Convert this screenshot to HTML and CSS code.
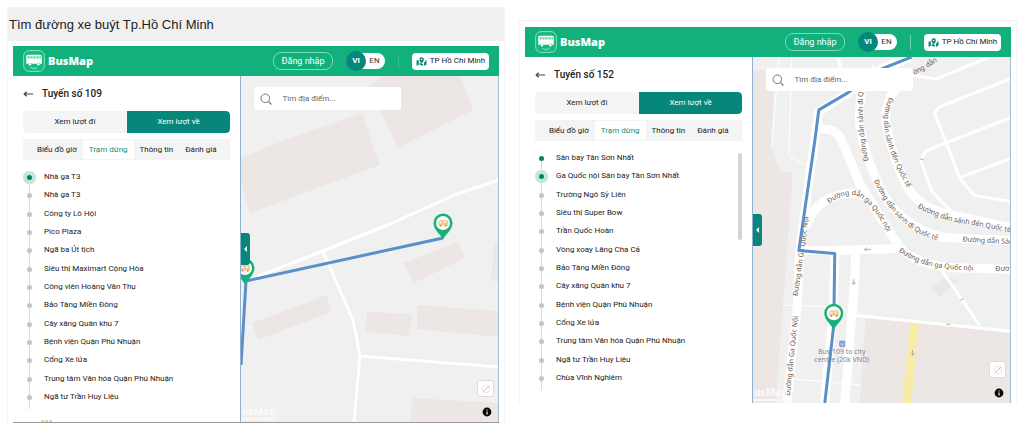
FILE: index.html
```
<!DOCTYPE html>
<html lang="vi">
<head>
<meta charset="utf-8">
<title>BusMap</title>
<link rel="stylesheet" href="styles.css">
</head>
<body>
<svg class="defs" aria-hidden="true">
  <symbol id="logo" viewBox="0 0 22 22">
    <rect x=".6" y=".6" width="20.8" height="20.8" rx="5.5" fill="#19b97f" stroke="#7be6b4" stroke-width="1"/>
    <path d="M4.500 4.800h12.500q1.800 0 1.800 1.800v7.200h-1.800a1.700 1.700 0 0 0-3.200 0H8.600a1.700 1.700 0 0 0-3.200 0H3.200V6.300q0-1.500 1.300-1.500z" fill="#fff"/>
    <path d="M4.500 6.300h2.200v2.200H4.500zM7.500 6.300h2.200v2.200H7.500zM10.500 6.300h2.200v2.200h-2.200zM13.500 6.300h2.200v2.200h-2.200zM16.400 6.300h1.600v2.200h-1.600z" fill="#5fd3a4"/>
    <circle cx="7" cy="14.300" r="1.200" fill="#fff"/><circle cx="15.400" cy="14.300" r="1.200" fill="#fff"/>
    <path d="M7.500 17.500q3.500 2.600 7 0" fill="none" stroke="#8beabf" stroke-width="1"/>
  </symbol>
  <symbol id="back" viewBox="0 0 12 8">
    <path d="M11 4H1.500M4 1.500L1.300 4L4 6.500" fill="none" stroke="#444" stroke-width="1.300"/>
  </symbol>
  <symbol id="lens" viewBox="0 0 12 12">
    <circle cx="5.300" cy="5.300" r="4.300" fill="none" stroke="#777" stroke-width="1"/>
    <path d="M8.500 8.500L11.500 11.500" stroke="#777" stroke-width="1.100"/>
  </symbol>
  <symbol id="mapmark" viewBox="0 0 12 10">
    <path d="M.5 4.200L3 3.200V8.800L.5 9.800zM4 6.500L7.800 8V9.800L4 8.600zM8.800 6.500L11.500 3V8.600L8.800 9.800z" fill="#0b8578"/>
    <path d="M6.200 7.200C4.500 5 3.700 4.200 3.700 2.800a2.500 2.500 0 0 1 5 0C8.700 4.200 7.900 5 6.200 7.200z" fill="#0b8578"/>
    <circle cx="6.200" cy="2.800" r=".9" fill="#fff"/>
  </symbol>
  <symbol id="pin" viewBox="0 0 20 27">
    <path d="M10 26.500C8.500 22.500.5 17 .5 10a9.500 9.500 0 0 1 19 0C19.500 17 11.500 22.500 10 26.500z" fill="#17b079"/>
    <circle cx="10" cy="10" r="7" fill="#fff"/>
    <path d="M5.500 8.500L8 7h6l1 2v3.500H5.500z" fill="#ecc98d"/>
    <path d="M6.500 8.800h2.300v1.700H6.500zM10.800 8h2v2h-2z" fill="#fff3dc"/>
    <circle cx="7.500" cy="12.800" r="1.100" fill="#c59a75"/><circle cx="12.800" cy="12.800" r="1.100" fill="#c59a75"/>
  </symbol>
  <symbol id="compass" viewBox="0 0 12 12">
    <circle cx="6" cy="6" r="3.800" fill="none" stroke="#eadada" stroke-width=".8"/>
    <path d="M3 9L9 3" stroke="#dcb6b8" stroke-width="1"/>
  </symbol>
  <symbol id="info" viewBox="0 0 10 10">
    <circle cx="5" cy="5" r="4.400" fill="#050505"/>
    <path d="M5 4.400V7.400M5 2.400V3.400" stroke="#fff" stroke-width="1.200"/>
  </symbol>
</svg>

<main class="shots">
  <section class="shot shot-titled">
    <h1 class="shot-title">Tìm đường xe buýt Tp.Hồ Chí Minh</h1>
    <div class="app">
      <header class="topbar">
        <svg class="logo"><use href="#logo"/></svg>
        <span class="brand">BusMap</span>
        <button class="login">Đăng nhập</button>
        <div class="lang"><button class="lang-on">VI</button><button class="lang-off">EN</button></div>
        <span class="divider"></span>
        <button class="city"><svg class="city-icon"><use href="#mapmark"/></svg>TP Hồ Chí Minh</button>
      </header>
      <div class="content">
        <aside class="side">
          <div class="route"><button class="back" aria-label="Quay lại"><svg class="back-icon"><use href="#back"/></svg></button><h2 class="route-name">Tuyến số 109</h2></div>
          <div class="ways"><button class="way">Xem lượt đi</button><button class="way way-on">Xem lượt về</button></div>
          <nav class="tabs"><button class="tab">Biểu đồ giờ</button><button class="tab tab-on">Trạm dừng</button><button class="tab">Thông tin</button><button class="tab">Đánh giá</button></nav>
          <ol class="stops">
            <li class="stop stop-here">Nhà ga T3</li>
            <li class="stop">Nhà ga T3</li>
            <li class="stop">Công ty Lô Hội</li>
            <li class="stop">Pico Plaza</li>
            <li class="stop">Ngã ba Út tịch</li>
            <li class="stop">Siêu thị Maximart Cộng Hòa</li>
            <li class="stop">Công viên Hoàng Văn Thụ</li>
            <li class="stop">Bảo Tàng Miền Đông</li>
            <li class="stop">Cây xăng Quân khu 7</li>
            <li class="stop">Bệnh viện Quận Phú Nhuận</li>
            <li class="stop">Cổng Xe lửa</li>
            <li class="stop">Trung tâm Văn hóa Quận Phú Nhuận</li>
            <li class="stop">Ngã tư Trần Huy Liệu</li>
          </ol>
          <span class="next-mark"></span>
        </aside>
        <div class="map">
          <svg class="canvas" viewBox="241 76 258 346" preserveAspectRatio="xMinYMin slice">
            <g class="building">
              <path d="M368 86L384 76H460L473 110L398 148L384 118z"/>
              <path d="M241 158L287 139L362 113L380 165L250 213L241 185z"/>
              <path d="M403 263L458 242L465 258L414 283z"/>
              <path d="M494 242H499V283L491 280z"/>
              <path d="M252 323L327 295L331 312L258 340z"/>
              <path d="M367 312L412 314L409 336L365 332z"/>
              <path d="M417 305L499 311V337L417 329z"/>
              <path d="M413 398L499 403V422H410z"/>
            </g>
            <g class="lane">
              <path d="M246 281L323 251L390 224L457 194L499 180"/>
              <path d="M323 251L335 279L353 320L360 356L354 422"/>
              <path d="M360 356L499 367"/>
            </g>
            <path class="track" d="M443 238L246 281L241 365"/>
            <use href="#pin" x="433" y="213" width="20" height="27"/>
            <use href="#pin" x="235" y="258" width="20" height="27"/>
          </svg>
          <label class="search"><svg class="lens"><use href="#lens"/></svg><input class="search-box" type="text" placeholder="Tìm địa điểm..." aria-label="Tìm địa điểm"></label>
          <button class="fold" aria-label="Thu gọn"></button>
          <span class="mark">BusMap</span>
          <button class="compass" aria-label="La bàn"><svg class="compass-icon"><use href="#compass"/></svg></button>
          <button class="info" aria-label="Thông tin bản đồ"><svg class="info-icon"><use href="#info"/></svg></button>
        </div>
      </div>
    </div>
  </section>

  <section class="shot shot-plain">
    <div class="app">
      <header class="topbar">
        <svg class="logo"><use href="#logo"/></svg>
        <span class="brand">BusMap</span>
        <button class="login">Đăng nhập</button>
        <div class="lang"><button class="lang-on">VI</button><button class="lang-off">EN</button></div>
        <span class="divider divider-clear"></span>
        <button class="city"><svg class="city-icon"><use href="#mapmark"/></svg>TP Hồ Chí Minh</button>
      </header>
      <div class="content">
        <aside class="side">
          <div class="route"><button class="back" aria-label="Quay lại"><svg class="back-icon"><use href="#back"/></svg></button><h2 class="route-name">Tuyến số 152</h2></div>
          <div class="ways"><button class="way">Xem lượt đi</button><button class="way way-on">Xem lượt về</button></div>
          <nav class="tabs"><button class="tab">Biểu đồ giờ</button><button class="tab tab-on">Trạm dừng</button><button class="tab">Thông tin</button><button class="tab">Đánh giá</button></nav>
          <ol class="stops">
            <li class="stop stop-past">Sân bay Tân Sơn Nhất</li>
            <li class="stop stop-here">Ga Quốc nội Sân bay Tân Sơn Nhất</li>
            <li class="stop">Trường Ngô Sỹ Liên</li>
            <li class="stop">Siêu thị Super Bow</li>
            <li class="stop">Trần Quốc Hoàn</li>
            <li class="stop">Vòng xoay Lăng Cha Cả</li>
            <li class="stop">Bảo Tàng Miền Đông</li>
            <li class="stop">Cây xăng Quân khu 7</li>
            <li class="stop">Bệnh viện Quận Phú Nhuận</li>
            <li class="stop">Cổng Xe lửa</li>
            <li class="stop">Trung tâm Văn hóa Quận Phú Nhuận</li>
            <li class="stop">Ngã tư Trần Huy Liệu</li>
            <li class="stop">Chùa Vĩnh Nghiêm</li>
          </ol>
          <span class="scroll-thumb"></span>
        </aside>
        <div class="map">
          <svg class="canvas" viewBox="753 56 258 347" preserveAspectRatio="xMinYMin slice">
            <defs>
              <path id="r1" d="M790 396L799 306"/>
              <path id="r2" d="M798 296L810 206"/>
              <path id="r3" d="M829 203Q850 188 864 199T894 245"/>
              <path id="r4" d="M869 160Q861 130 864 78"/>
              <path id="r5" d="M874 180Q887 207 904 222T948 242"/>
              <path id="r6" d="M890 96Q880 116 888 142T912 194"/>
              <path id="r7" d="M918 207Q940 219 965 223T1030 236"/>
              <path id="r8" d="M899 251Q919 265 945 268T990 270"/>
              <path id="r9" d="M915 74Q930 66 951 52"/>
            </defs>
            <g class="building">
              <path d="M753 69H775L771 145L780 170L793 172L785 280L776 403H753z"/>
              <path d="M866 317L1011 332V403H860z"/>
              <path d="M931 288L947 276L958 280L941 297z"/>
            </g>
            <g class="kerb">
              <path d="M792 56L789 155L806 164M779 56L772 145M785 305L829 306M785 378L861 385"/>
            </g>
            <g class="lane">
              <path d="M838 56L841 67M913 74L937 78L990 56"/>
              <path d="M1011 78L940 106L935 112L947 142L1011 117"/>
              <path d="M947 142L927 150L921 159L932 190L957 217"/>
              <path d="M947 142L960 177L975 195L1011 201M960 177L1011 158"/>
              <path d="M937 263L955 288L980 325M855 315L1011 331"/>
            </g>
            <g class="road">
              <path d="M912 56L882 68L848 92L819 111L812 160L800 249L797 310L787 403"/>
              <path d="M816 129Q836 125 842 140L860 183L900 247Q917 264 950 267L1011 269"/>
              <path d="M806 227Q815 198 845 193Q858 191 865 197"/>
              <path d="M799 250H835L898 248M835 252L834 303L825 403M856 251L855 280L845 403"/>
              <path d="M876 68Q858 80 860 125Q866 160 885 196Q908 230 945 237L1011 240"/>
              <path d="M908 76Q880 98 888 130Q897 170 911 192Q925 209 951 214L1011 227"/>
            </g>
            <path class="yellow" d="M915 323L907 403"/>
            <g class="street">
              <text><textPath href="#r1">Đường dẫn Ga Quốc Nội</textPath></text>
              <text><textPath href="#r2">Đường dẫn Ga Quốc Nội</textPath></text>
              <text><textPath href="#r3">Đường dẫn ga Quốc nội</textPath></text>
              <text><textPath href="#r4">Đường dẫn sảnh đi Q</textPath></text>
              <text><textPath href="#r5">Đường dẫn sảnh đi Quốc tế</textPath></text>
              <text><textPath href="#r6">Đường dẫn sảnh đến Quốc tế</textPath></text>
              <text><textPath href="#r7">Đường dẫn sảnh đến Quốc tế</textPath></text>
              <text><textPath href="#r8">Đường dẫn ga Quốc nội</textPath></text>
              <text><textPath href="#r9">ờng dẫn</textPath></text>
              <text x="963" y="241" transform="rotate(3 963 241)">Đường dẫn Sản</text>
              <text x="996" y="271">Đườ</text>
            </g>
            <path class="arrows" d="M871 249H865M867 247L865 249L867 251M854 284V279M852 282L854 284L856 282M920 158L924 159M947 324H951M961 300L964 298M913 350V355M911 353L913 355L915 353"/>
            <path class="track" d="M912 56L882 68L848 92L819 109L815 140L799 250L835 253L834 325L825 403"/>
            <path d="M840 341h5v5h-5zM841 342.500h3M841 346.500v1M844 346.500v1" fill="#a8bde9" stroke="#5c80d0" stroke-width=".8"/>
            <g class="place"><text x="842" y="354">Bus 109 to city</text><text x="842" y="362">centre (20k VND)</text></g>
            <use href="#pin" x="824" y="303" width="20" height="27"/>
          </svg>
          <label class="search"><svg class="lens"><use href="#lens"/></svg><input class="search-box" type="text" placeholder="Tìm địa điểm..." aria-label="Tìm địa điểm"></label>
          <button class="fold" aria-label="Thu gọn"></button>
          <span class="mark">BusMap</span>
          <button class="compass" aria-label="La bàn"><svg class="compass-icon"><use href="#compass"/></svg></button>
          <button class="info" aria-label="Thông tin bản đồ"><svg class="info-icon"><use href="#info"/></svg></button>
        </div>
      </div>
    </div>
  </section>
</main>
</body>
</html>
```
FILE: styles.css
```
* { box-sizing: border-box; }
body { margin: 0; background: #fff; color: #222; font: 8px/12px Roboto, sans-serif; overflow: hidden; }
button, input { font: inherit; color: inherit; border: 0; padding: 0; margin: 0; background: none; white-space: nowrap; }
h1, h2, ol { margin: 0; padding: 0; }
.defs { position: absolute; width: 0; height: 0; }

.shots { display: grid; grid-template-columns: 1fr 1fr; gap: 14px; padding: 0 7px; align-items: start; }
.shot { border: 1px solid #f3f3f3; min-width: 0; }
.shot-titled { margin-top: 7px; border-bottom: 0; }
.shot-plain { margin-top: 20px; border-bottom: 0; }
.shot-title { background: #f0f0f0; padding: 0 1px; height: 33px; font: 13px/33px "Liberation Sans", sans-serif; color: #222; }
.app { margin: 5px 5px 0; }
.shot-plain .app { margin-top: 6px; }
.shot-titled .app { border-bottom: 1px solid #999; }

.topbar { display: flex; align-items: center; height: 30px; padding: 0 10px; background: #12b07d; color: #fff; }
.logo { width: 22px; height: 22px; }
.brand { flex: 1; padding-left: 3px; font: 800 11px/16px "Open Sans", sans-serif; }
.login { width: 60px; height: 18px; border: 1px solid #7cdcb8; border-radius: 8px; font-size: 9px; }
.lang { display: flex; align-items: center; margin: 0 13px; }
.lang-on { width: 20px; height: 20px; border-radius: 50%; background: #07877a; font-weight: 700; z-index: 1; }
.lang-off { width: 29px; height: 16px; margin-left: -10px; padding-left: 8px; border-radius: 8px; background: #fff; color: #333; }
.divider { width: 1px; height: 15px; margin-right: 13px; background: #2dbb8c; }
.divider-clear { background: #6dcfac; }
.city { display: flex; align-items: center; justify-content: center; gap: 3px; width: 77px; height: 17px; border-radius: 4px; background: #fff; color: #222; }
.city-icon { width: 11px; height: 9px; }

.content { display: grid; grid-template-columns: 47fr 53fr; }
.side { position: relative; padding: 0 10px 16px; border-right: 1px solid #8fb1d0; min-width: 0; }
.route { display: flex; align-items: center; gap: 8px; height: 35px; }
.back { display: flex; }
.back-icon { width: 11px; height: 8px; }
.route-name { font-size: 10px; font-weight: 500; line-height: 14px; }
.ways { display: grid; grid-template-columns: 1fr 1fr; height: 22px; border-radius: 4px; overflow: hidden; background: #f5f5f5; }
.way-on { background: #07877a; color: #fff; border-radius: 0 4px 4px 0; }
.tabs { display: flex; justify-content: center; height: 21px; margin: 6px 0 8px; background: #f4f4f4; }
.tab { padding: 0 6px; }
.tab-on { margin: 1px 0; background: #fff; color: #0f8f7e; }
.stops { position: relative; display: flex; flex-direction: column; min-height: 238px; list-style: none; }
.stops::before { content: ""; position: absolute; left: 6px; top: 10px; bottom: -3px; width: 1px; background: #d9d9d9; }
.stop { position: relative; flex: 1; display: flex; align-items: center; padding-left: 21px; white-space: nowrap; }
.stop::before { content: ""; position: absolute; left: 4px; top: 50%; width: 5px; height: 5px; margin-top: -2px; border-radius: 50%; background: #c4c4c4; }
.stop-past::before, .stop-here::before { background: #0b7e6e; }
.stop-here::before { box-shadow: 0 0 0 4px #bfe8dd; }
.next-mark { position: absolute; left: 28px; bottom: 0; width: 12px; height: 2px; background: repeating-linear-gradient(90deg, #f7cf7d 0 3px, #fff 3px 4px); }
.scroll-thumb { position: absolute; right: 10px; top: 96px; width: 4px; height: 87px; border-radius: 2px; background: #d5d5d8; }

.map { position: relative; overflow: hidden; background: #f0f0f0; border-right: 1px solid #a9bdd0; }
.canvas { position: absolute; inset: 0; width: 100%; height: 100%; }
.building { fill: #ece7e4; }
.lane, .road, .kerb { fill: none; stroke: #fff; stroke-width: 3; stroke-linejoin: round; }
.road { stroke-width: 9; }
.kerb { stroke-width: 1; }
.yellow { fill: none; stroke: #f8eba8; stroke-width: 9; }
.track { fill: none; stroke: #5b8fc7; stroke-width: 3; stroke-linejoin: round; }
.street { font: 7px "Noto Sans", sans-serif; fill: #6d5a4d; }
.place { font: 7px "Noto Sans", sans-serif; fill: #858590; text-anchor: middle; }
.arrows { fill: none; stroke: #aaa; stroke-width: 1; }
.search { position: absolute; left: 13px; top: 11px; display: flex; align-items: center; gap: 10px; width: 147px; height: 23px; padding: 0 6px; border-radius: 3px; background: #fff; }
.lens { flex: none; width: 12px; height: 12px; }
.search-box { flex: 1; min-width: 0; outline: 0; }
.search-box::placeholder { color: #666; opacity: 1; }
.fold { position: absolute; left: 0; top: 50%; width: 9px; height: 32px; margin-top: -16px; border-radius: 0 3px 3px 0; background: #07877a; }
.fold::before { content: ""; position: absolute; left: 3px; top: 13px; border: solid transparent; border-width: 3px 3px 3px 0; border-right-color: #fff; }
.mark { position: absolute; left: -6px; bottom: 2px; padding-bottom: 1px; border-bottom: 2px solid #f8f8f8; font: 700 10px/12px "Open Sans", sans-serif; color: #fafafa; }
.compass { position: absolute; right: 4px; bottom: 25px; display: flex; align-items: center; justify-content: center; width: 17px; height: 17px; border: 1px solid #ddd; border-radius: 3px; background: #fff; }
.compass-icon { width: 12px; height: 12px; }
.info { position: absolute; right: 6px; bottom: 5px; display: flex; }
.info-icon { width: 10px; height: 10px; }
```
